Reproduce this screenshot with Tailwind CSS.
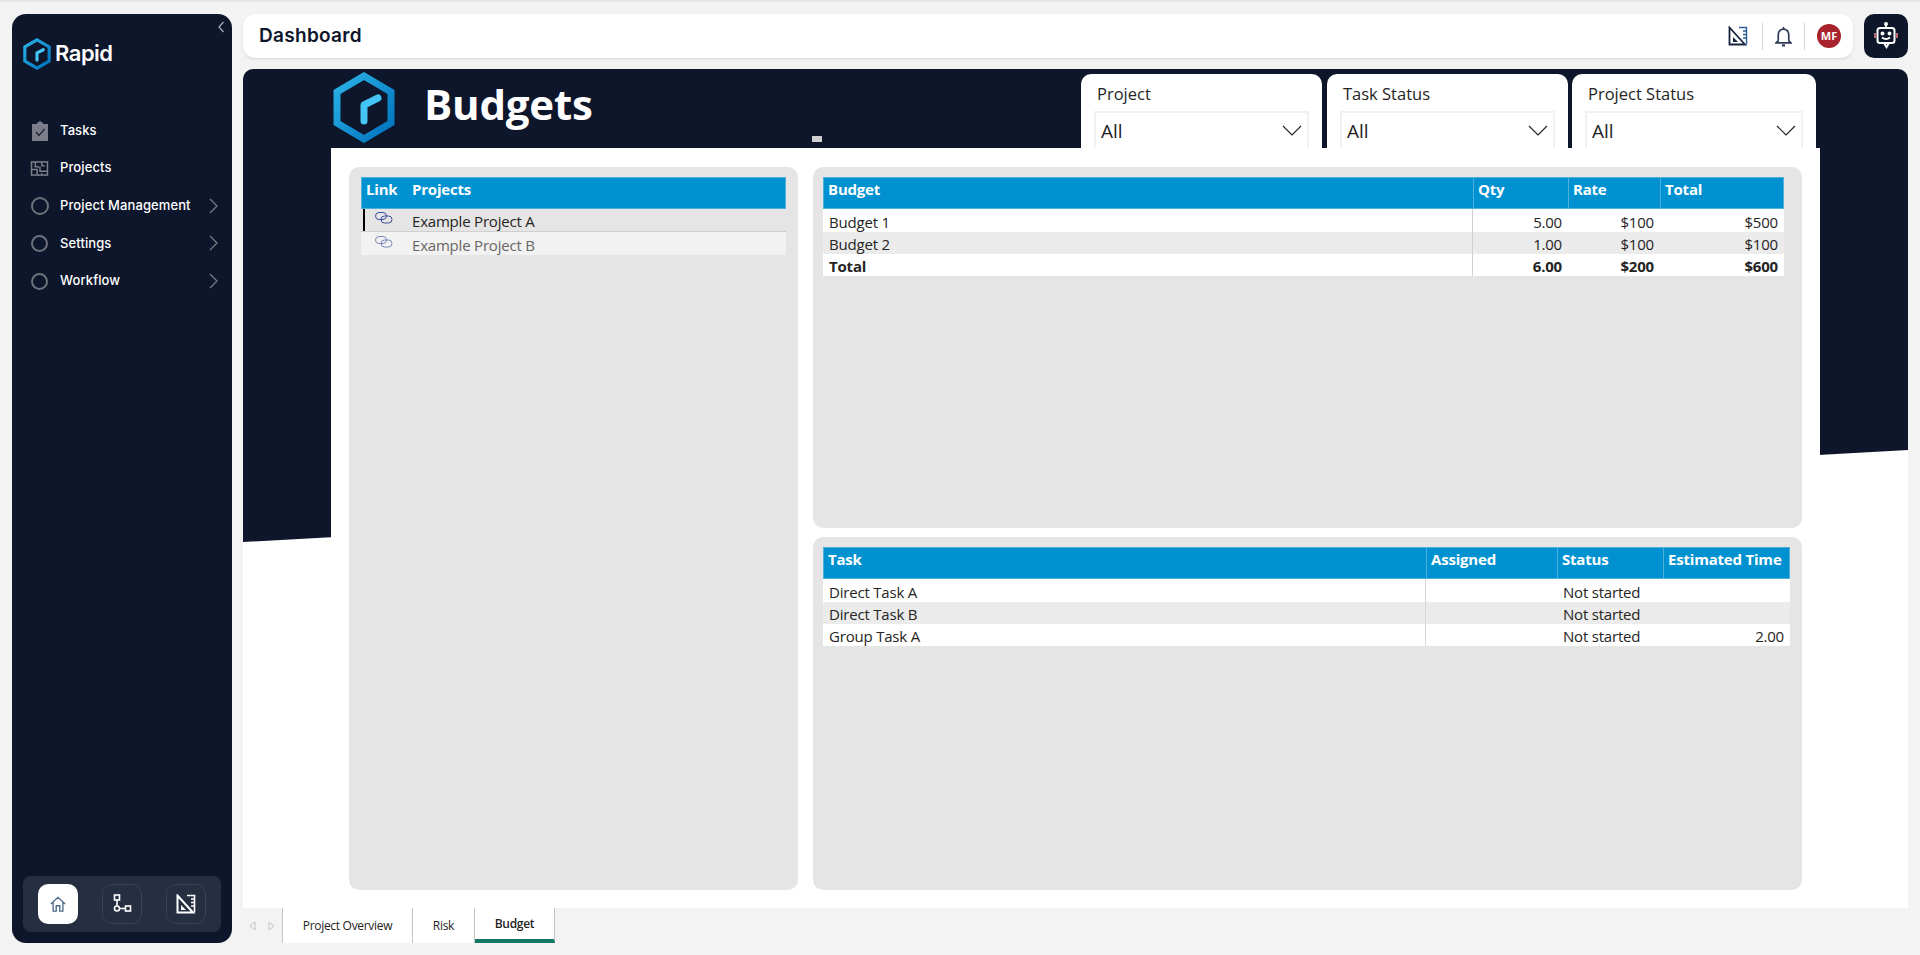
<!DOCTYPE html>
<html lang="en">
<head>
    <meta charset="UTF-8">
    <title>Dashboard</title>
    <script src="https://cdn.jsdelivr.net/npm/@tailwindcss/browser@4"></script>
</head>
<body class="bg-[#f3f3f3] font-['Open_Sans',sans-serif] overflow-hidden">
    <div class="h-[955px] w-[1920px] border-t-2 border-[#e6e6e6] pt-[12px] pl-[12px] flex">
        <!-- sidebar -->
        <aside class="w-[220px] h-[929px] bg-[#0d162b] rounded-[14px] flex flex-col relative font-['Inter',sans-serif]">
            <svg class="absolute right-[7px] top-[6px]" width="8" height="14" viewBox="0 0 8 14" fill="none" stroke="#aeb2bb" stroke-width="1.2"><path d="M6.5 2 L2 7 L6.5 12"/></svg>
            <div class="flex items-center pl-[11px] pt-[23px] gap-[4px]">
                <svg width="28" height="32" viewBox="0 0 62 71" fill="none">
                    <defs><linearGradient id="hexa" x1="0" y1="0" x2="1" y2="1"><stop offset="0" stop-color="#2bb3e8"/><stop offset="1" stop-color="#0071bc"/></linearGradient></defs>
                    <polygon points="31,4 58,20 58,51 31,67 4,51 4,20" stroke="url(#hexa)" stroke-width="7"/>
                    <path d="M31 49 V33 L45 26" stroke="#45c5f5" stroke-width="7" stroke-linejoin="round" stroke-linecap="round"/>
                </svg>
                <span class="text-white text-[22px] font-semibold tracking-[-0.5px]">Rapid</span>
            </div>
            <nav class="mt-[42px] flex flex-col text-white text-[13px] font-medium tracking-[0.1px]">
                <a class="h-[37px] flex items-center pl-[19px]">
                    <svg width="18" height="20" viewBox="0 0 18 20"><path d="M1 3 H6 V1.5 H7.5 A1.5 1.5 0 0 1 10.5 1.5 H12 V3 H17 V20 H1 Z" fill="#7b7e88"/><path d="M5 11 L8 14.5 L13.5 8" fill="none" stroke="#1d2436" stroke-width="1.3"/></svg>
                    <span class="ml-[11px]">Tasks</span>
                </a>
                <a class="h-[38px] flex items-center pl-[19px]">
                    <svg class="-ml-[1px]" width="19" height="15" viewBox="0 0 19 16" fill="none" stroke="#7b7e88" stroke-width="1.6"><rect x="1" y="1" width="17" height="14"/><path d="M5 1 V6 H9 M12 1 V5 H15 M1 9 H7 V15 M10 6 V11 H18 M12 15 V13"/></svg>
                    <span class="ml-[11px]">Projects</span>
                </a>
                <a class="h-[37.5px] flex items-center pl-[19px]">
                    <span class="w-[18px] h-[18px] rounded-full border-2 border-[#6e717c]"></span>
                    <span class="ml-[11px]">Project Management</span>
                    <svg class="ml-auto mr-[14px]" width="9" height="16" viewBox="0 0 9 16" fill="none" stroke="#7b7e88" stroke-width="1.2"><path d="M1 1 L8 8 L1 15"/></svg>
                </a>
                <a class="h-[37.5px] flex items-center pl-[19px]">
                    <span class="w-[17px] h-[17px] rounded-full border-2 border-[#6e717c]"></span>
                    <span class="ml-[12px]">Settings</span>
                    <svg class="ml-auto mr-[14px]" width="9" height="16" viewBox="0 0 9 16" fill="none" stroke="#7b7e88" stroke-width="1.2"><path d="M1 1 L8 8 L1 15"/></svg>
                </a>
                <a class="h-[38px] flex items-center pl-[19px]">
                    <span class="w-[17px] h-[17px] rounded-full border-2 border-[#6e717c]"></span>
                    <span class="ml-[12px]">Workflow</span>
                    <svg class="ml-auto mr-[14px]" width="9" height="16" viewBox="0 0 9 16" fill="none" stroke="#7b7e88" stroke-width="1.2"><path d="M1 1 L8 8 L1 15"/></svg>
                </a>
            </nav>
            <div class="mt-auto mb-[11px] mx-[11px] h-[56px] bg-[#262e41] rounded-[8px] flex items-center pl-[15px] gap-[24px]">
                <div class="w-[40px] h-[40px] bg-white rounded-[10px] flex items-center justify-center">
                    <svg width="16" height="16" viewBox="0 0 18 18" fill="none" stroke="#4b6a8c" stroke-width="1.5"><path d="M1 9 L9 1.5 L17 9 M3.5 7 V17 H7 V11 H11 V17 H14.5 V7"/></svg>
                </div>
                <div class="w-[40px] h-[40px] border border-[#3b4254] rounded-[10px] flex items-center justify-center">
                    <svg width="20" height="20" viewBox="0 0 20 20" fill="none" stroke="#fff" stroke-width="1.6"><rect x="2.5" y="1" width="5" height="5"/><path d="M5 6 V12"/><circle cx="5" cy="14.5" r="2.5"/><path d="M8 14.5 H13"/><rect x="13.5" y="12" width="5" height="5"/></svg>
                </div>
                <div class="w-[40px] h-[40px] border border-[#3b4254] rounded-[10px] flex items-center justify-center">
                    <svg width="20" height="20" viewBox="0 0 20 20" fill="none" stroke="#fff" stroke-width="2"><path d="M1.5 1.5 L17 18.5 H1.5 Z"/><path d="M5 11 L10 16 H5 Z" fill="#fff" stroke="none"/><path d="M11 1.5 H18.5 V18.5 M15 5 H18 M15 8.5 H18 M15 12 H18" stroke-width="1.6"/></svg>
                </div>
            </div>
        </aside>

        <div class="ml-[11px] w-[1665px] flex flex-col">
            <!-- top bar -->
            <div class="flex h-[44px]">
                <header class="w-[1610px] bg-white rounded-[12px] flex items-center pl-[16px] pr-[12px] shadow-sm">
                    <h1 class="font-['Inter',sans-serif] font-semibold text-[19px] tracking-[0.3px] text-[#0d162b]">Dashboard</h1>
                    <div class="ml-auto flex items-center">
                        <svg width="20" height="20" viewBox="0 0 20 20" fill="none" stroke="#16233f" stroke-width="1.8"><path d="M1.5 1.5 L17 18.5 H1.5 Z"/><path d="M5 11 L10 16 H5 Z" fill="#16233f" stroke="none"/><path d="M11 1.5 H18.5 V18.5 M15 5 H18 M15 8.5 H18 M15 12 H18" stroke="#2a5d94" stroke-width="1.4"/></svg>
                        <span class="w-px h-[27px] bg-[#d4d4d4] ml-[14px]"></span>
                        <svg class="ml-[12px]" width="17" height="21" viewBox="0 0 16 20" fill="none" stroke="#2e3a55" stroke-width="1.6"><path d="M8 1 V2.5 M3 14 V8 A5 5 0 0 1 13 8 V14 L15 16 H1 Z"/><path d="M6.5 18.5 H9.5" stroke-width="2"/></svg>
                        <span class="w-px h-[27px] bg-[#d4d4d4] ml-[12px]"></span>
                        <span class="ml-[12px] w-[24px] h-[24px] rounded-full bg-[#a8232d] text-white text-[11px] font-bold flex items-center justify-center">MF</span>
                    </div>
                </header>
                <button class="ml-[11px] w-[44px] h-[44px] bg-[#0d162b] rounded-[10px] flex items-center justify-center">
                    <svg width="24" height="28" viewBox="0 0 24 28" fill="none" stroke="#fff" stroke-width="2"><path d="M12 1.5 V6"/><circle cx="12" cy="2" r="1" fill="#fff"/><rect x="3.5" y="6" width="17" height="15" rx="2.5"/><path d="M10 21 L12.5 25 L15 21" /><circle cx="8.5" cy="11.5" r="1" fill="#fff"/><circle cx="15.5" cy="11.5" r="1" fill="#fff"/><path d="M8 15.5 Q12 18.5 16 15.5"/><path d="M1 11 V16 M23 11 V16" stroke="#e27d7d" stroke-width="1.6"/></svg>
                </button>
            </div>

            <!-- report -->
            <main class="relative mt-[11px] h-[874px] bg-white rounded-[10px] overflow-hidden flex flex-col">
                <svg class="absolute left-0 top-0" width="1665" height="480" viewBox="0 0 1665 480"><polygon points="0,0 1665,0 1665,381 0,473" fill="#0d162b"/></svg>
                <div class="relative flex-1 ml-[88px] w-[1489px] flex flex-col">
                    <div class="h-[79px] flex">
                        <svg class="ml-[2px] mt-[3px]" width="62" height="71" viewBox="0 0 62 71" fill="none">
                            <defs><linearGradient id="hexb" x1="0" y1="0" x2="1" y2="1"><stop offset="0" stop-color="#2bb3e8"/><stop offset="1" stop-color="#0071bc"/></linearGradient></defs>
                            <polygon points="31,4 58,20 58,51 31,67 4,51 4,20" stroke="url(#hexb)" stroke-width="7"/>
                            <path d="M31 49 V33 L45 26" stroke="#45c5f5" stroke-width="7" stroke-linejoin="round" stroke-linecap="round"/>
                        </svg>
                        <div class="ml-[29px] mt-[3px] text-white text-[42px] font-bold leading-[64px] tracking-[-0.2px]">Budgets</div>
                        <div class="ml-auto mr-[4px] mt-[5px] flex gap-[5px] relative">
                            <span class="absolute -left-[269px] bottom-[6px] w-[10px] h-[6px] bg-[#cfcfcf]"></span>
                            <div class="w-[241px] h-[74px] bg-white rounded-t-[10px] pl-[13px] pr-[13px] flex flex-col">
                                <div class="pl-[3px] pt-[9px] text-[16.5px] leading-[22px] text-[#252423]">Project</div>
                                <div class="mt-[6px] h-[37px] border-2 border-b-0 border-[#f1f1f1] flex items-center pl-[5px] pr-[5px] pt-[2px] text-[19px] text-[#252423]">All
                                    <svg class="ml-auto -mt-[2px]" width="20" height="11" viewBox="0 0 20 11" fill="none" stroke="#252423" stroke-width="1.2"><path d="M1 1 L10 10 L19 1"/></svg>
                                </div>
                            </div>
                            <div class="w-[241px] h-[74px] bg-white rounded-t-[10px] pl-[13px] pr-[13px] flex flex-col">
                                <div class="pl-[3px] pt-[9px] text-[16.5px] leading-[22px] text-[#252423]">Task Status</div>
                                <div class="mt-[6px] h-[37px] border-2 border-b-0 border-[#f1f1f1] flex items-center pl-[5px] pr-[5px] pt-[2px] text-[19px] text-[#252423]">All
                                    <svg class="ml-auto -mt-[2px]" width="20" height="11" viewBox="0 0 20 11" fill="none" stroke="#252423" stroke-width="1.2"><path d="M1 1 L10 10 L19 1"/></svg>
                                </div>
                            </div>
                            <div class="w-[244px] -ml-[1px] h-[74px] bg-white rounded-t-[10px] pl-[13px] pr-[13px] flex flex-col">
                                <div class="pl-[3px] pt-[9px] text-[16.5px] leading-[22px] text-[#252423]">Project Status</div>
                                <div class="mt-[6px] h-[37px] border-2 border-b-0 border-[#f1f1f1] flex items-center pl-[5px] pr-[5px] pt-[2px] text-[19px] text-[#252423]">All
                                    <svg class="ml-auto -mt-[2px]" width="20" height="11" viewBox="0 0 20 11" fill="none" stroke="#252423" stroke-width="1.2"><path d="M1 1 L10 10 L19 1"/></svg>
                                </div>
                            </div>
                        </div>
                    </div>

                    <div class="flex-1 bg-white pl-[18px] pt-[19px] flex gap-[15px] text-[15px] text-[#252423] tracking-[-0.2px]">
                        <!-- projects slicer -->
                        <section class="w-[449px] h-[723px] bg-[#e5e5e5] rounded-[10px] px-[12px] pt-[10px]">
                            <div class="h-[32px] bg-[#0091d1] border border-[#4fb0dc] text-white font-bold flex">
                                <span class="w-[44px] pl-[4px]">Link</span><span class="pl-[6px]">Projects</span>
                            </div>
                            <div class="h-[23px] flex items-center border-b border-[#cfcfcf] relative">
                                <span class="absolute left-[2px] top-0 w-[2px] h-[22px] bg-black"></span>
                                <svg class="ml-[14px] -mt-[4px]" width="18" height="12" viewBox="0 0 18 12" fill="none" stroke="#3f4f9b" stroke-width="1"><rect x="0.5" y="0.5" width="11" height="7" rx="3.5"/><rect x="6" y="4" width="11" height="7" rx="3.5"/></svg>
                                <span class="ml-[19px] pt-[3px]">Example Project A</span>
                            </div>
                            <div class="h-[23px] flex items-center bg-[#f2f2f2] text-[#666666]">
                                <svg class="ml-[14px] -mt-[4px]" width="18" height="12" viewBox="0 0 18 12" fill="none" stroke="#7d88bd" stroke-width="1"><rect x="0.5" y="0.5" width="11" height="7" rx="3.5"/><rect x="6" y="4" width="11" height="7" rx="3.5"/></svg>
                                <span class="ml-[19px] pt-[3px]">Example Project B</span>
                            </div>
                        </section>

                        <div class="w-[989px] h-[723px] flex flex-col gap-[9px]">
                            <!-- budget table -->
                            <section class="h-[361px] bg-[#e5e5e5] rounded-[10px] px-[10px] pt-[10px]">
                                <div class="w-[961px] grid grid-cols-[650px_95px_92px_124px]">
                                    <div class="h-[32px] bg-[#0091d1] border-y border-l border-[#4fb0dc] text-white font-bold px-[4px]">Budget</div>
                                    <div class="h-[32px] bg-[#0091d1] border-y border-l border-[#4fb0dc] text-white font-bold px-[4px]">Qty</div>
                                    <div class="h-[32px] bg-[#0091d1] border-y border-l border-[#4fb0dc] text-white font-bold px-[4px]">Rate</div>
                                    <div class="h-[32px] bg-[#0091d1] border border-[#4fb0dc] text-white font-bold px-[4px]">Total</div>

                                    <div class="h-[23px] bg-white border-r border-[#d0d0d0] px-[6px] pt-[2px]">Budget 1</div>
                                    <div class="h-[23px] bg-white px-[6px] pt-[2px] text-right">5.00</div>
                                    <div class="h-[23px] bg-white px-[6px] pt-[2px] text-right">$100</div>
                                    <div class="h-[23px] bg-white px-[6px] pt-[2px] text-right">$500</div>

                                    <div class="h-[22px] bg-[#ebebeb] border-r border-[#d0d0d0] px-[6px] pt-[1px]">Budget 2</div>
                                    <div class="h-[22px] bg-[#ebebeb] px-[6px] pt-[1px] text-right">1.00</div>
                                    <div class="h-[22px] bg-[#ebebeb] px-[6px] pt-[1px] text-right">$100</div>
                                    <div class="h-[22px] bg-[#ebebeb] px-[6px] pt-[1px] text-right">$100</div>

                                    <div class="h-[22px] bg-white border-r border-[#d0d0d0] px-[6px] pt-[1px] font-bold">Total</div>
                                    <div class="h-[22px] bg-white px-[6px] pt-[1px] text-right font-bold">6.00</div>
                                    <div class="h-[22px] bg-white px-[6px] pt-[1px] text-right font-bold">$200</div>
                                    <div class="h-[22px] bg-white px-[6px] pt-[1px] text-right font-bold">$600</div>
                                </div>
                            </section>
                            <!-- tasks table -->
                            <section class="h-[353px] bg-[#e5e5e5] rounded-[10px] px-[10px] pt-[10px]">
                                <div class="w-[967px] grid grid-cols-[603px_131px_106px_127px]">
                                    <div class="h-[32px] bg-[#0091d1] border-y border-l border-[#4fb0dc] text-white font-bold px-[4px]">Task</div>
                                    <div class="h-[32px] bg-[#0091d1] border-y border-l border-[#4fb0dc] text-white font-bold px-[4px]">Assigned</div>
                                    <div class="h-[32px] bg-[#0091d1] border-y border-l border-[#4fb0dc] text-white font-bold px-[4px]">Status</div>
                                    <div class="h-[32px] bg-[#0091d1] border border-[#4fb0dc] text-white font-bold px-[4px] whitespace-nowrap">Estimated Time</div>

                                    <div class="h-[23px] bg-white border-r border-[#d8d8d8] px-[6px] pt-[2px]">Direct Task A</div>
                                    <div class="h-[23px] bg-white"></div>
                                    <div class="h-[23px] bg-white px-[6px] pt-[2px]">Not started</div>
                                    <div class="h-[23px] bg-white"></div>

                                    <div class="h-[22px] bg-[#ebebeb] border-r border-[#d8d8d8] px-[6px] pt-[1px]">Direct Task B</div>
                                    <div class="h-[22px] bg-[#ebebeb]"></div>
                                    <div class="h-[22px] bg-[#ebebeb] px-[6px] pt-[1px]">Not started</div>
                                    <div class="h-[22px] bg-[#ebebeb]"></div>

                                    <div class="h-[22px] bg-white border-r border-[#d8d8d8] px-[6px] pt-[1px]">Group Task A</div>
                                    <div class="h-[22px] bg-white"></div>
                                    <div class="h-[22px] bg-white px-[6px] pt-[1px]">Not started</div>
                                    <div class="h-[22px] bg-white px-[6px] pt-[1px] text-right">2.00</div>
                                </div>
                            </section>
                        </div>
                    </div>
                </div>

                <!-- page tabs -->
                <footer class="relative h-[35px] bg-[#f3f3f3] flex text-[12px] text-[#252423] tracking-[-0.3px]">
                    <div class="w-[39px] flex items-center pl-[6px] gap-[12px]">
                        <svg width="7" height="10" viewBox="0 0 7 10" fill="none" stroke="#c4c4c4"><path d="M6 1 L1 5 L6 9 Z"/></svg>
                        <svg width="7" height="10" viewBox="0 0 7 10" fill="none" stroke="#c4c4c4"><path d="M1 1 L6 5 L1 9 Z"/></svg>
                    </div>
                    <div class="w-[131px] bg-white border-x border-[#c4c4c4] flex items-center justify-center">Project Overview</div>
                    <div class="w-[62px] bg-white border-r border-[#c4c4c4] flex items-center justify-center">Risk</div>
                    <div class="w-[80px] bg-white border-r border-[#c4c4c4] border-b-4 border-b-[#117865] flex items-center justify-center font-semibold">Budget</div>
                </footer>
            </main>
        </div>
    </div>
</body>
</html>
